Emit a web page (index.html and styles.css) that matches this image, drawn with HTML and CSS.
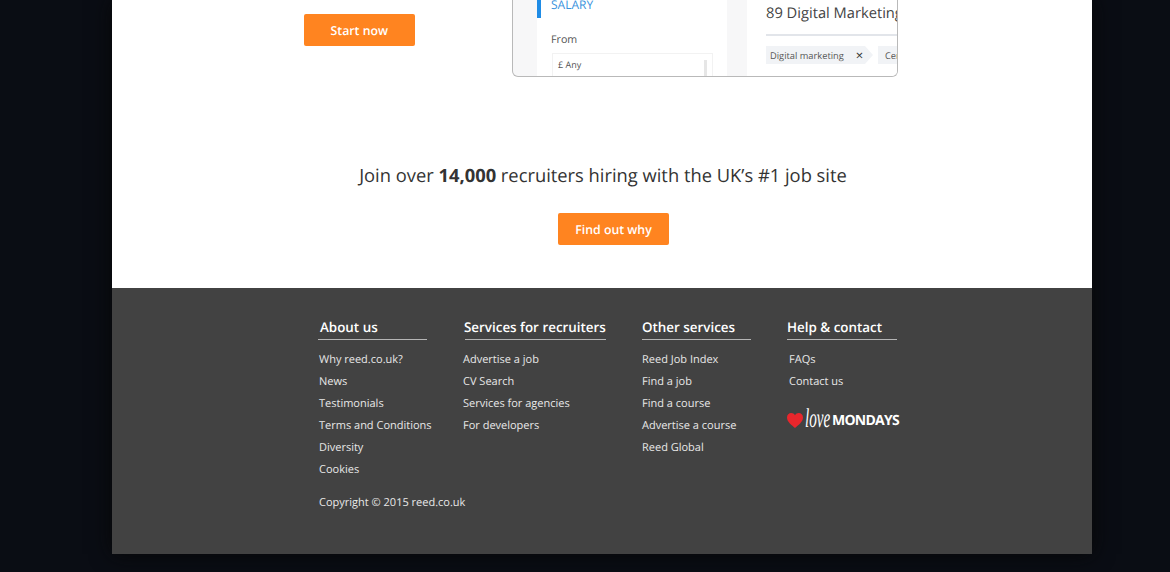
FILE: index.html
```html
<!DOCTYPE html>
<html lang="en">
<head>
<meta charset="utf-8">
<title>Reed</title>
<link rel="stylesheet" href="styles.css">
</head>
<body>
<div class="page">
  <main class="main">
    <section class="hero">
      <div class="hero-cta"><a class="btn" href="#">Start now</a></div>
      <div class="mock">
        <div class="mock-side">
          <div class="mock-title">SALARY</div>
          <div class="mock-label">From</div>
          <div class="mock-select">£ Any<span class="mock-scroll"></span></div>
        </div>
        <div class="mock-results">
          <div class="mock-heading">89 Digital Marketing jobs</div>
          <div class="mock-tags">
            <span class="tag">Digital marketing<span class="tag-x">×</span></span>
            <span class="tag tag-next">Central</span>
          </div>
        </div>
      </div>
    </section>
    <section class="join">
      <h2 class="join-title">Join over <strong>14,000</strong> recruiters hiring with the UK’s #1 job site</h2>
      <a class="btn btn-join" href="#">Find out why</a>
    </section>
  </main>
  <footer class="footer">
    <div class="cols">
      <nav class="col col-about">
        <h3 class="col-title">About us</h3>
        <ul class="links">
          <li>Why reed.co.uk?</li><li>News</li><li>Testimonials</li><li>Terms and Conditions</li><li>Diversity</li><li>Cookies</li>
        </ul>
      </nav>
      <nav class="col col-services">
        <h3 class="col-title">Services for recruiters</h3>
        <ul class="links">
          <li>Advertise a job</li><li>CV Search</li><li>Services for agencies</li><li>For developers</li>
        </ul>
      </nav>
      <nav class="col col-other">
        <h3 class="col-title">Other services</h3>
        <ul class="links">
          <li>Reed Job Index</li><li>Find a job</li><li>Find a course</li><li>Advertise a course</li><li>Reed Global</li>
        </ul>
      </nav>
      <nav class="col col-help">
        <h3 class="col-title">Help &amp; contact</h3>
        <ul class="links">
          <li>FAQs</li><li>Contact us</li>
        </ul>
        <div class="lovemondays">
          <svg class="heart" viewBox="0 0 16 15" width="16" height="15" aria-hidden="true"><path d="M8 15C5 12 0 9 0 4.400 0 1.800 2 0 4.200 0 5.800 0 7.200.8 8 2.200 8.800.8 10.200 0 11.800 0 14 0 16 1.800 16 4.400 16 9 11 12 8 15Z" fill="#e8262c"/></svg>
          <span class="love">love</span><span class="mondays">MONDAYS</span>
        </div>
      </nav>
    </div>
    <p class="copyright">Copyright © 2015 reed.co.uk</p>
  </footer>
</div>
</body>
</html>
```
FILE: styles.css
```css
* { box-sizing: border-box; }
html, body { margin: 0; padding: 0; }
body {
  background: #0a0d14;
  font-family: "Open Sans", "Liberation Sans", sans-serif;
  text-rendering: geometricPrecision;
  height: 572px;
  overflow: hidden;
}
.page {
  width: 980px;
  margin-left: 112px;
  box-shadow: 0 0 20px #070707;
}
.main { background: #fff; height: 288px; }
.hero {
  display: flex;
  height: 77px;
  padding-left: 192px;
}
.hero-cta { width: 208px; padding-top: 14px; }
.btn {
  display: inline-block;
  width: 110.500px;
  height: 32px;
  line-height: 33px;
  background: #ff8420;
  border-radius: 2px;
  color: #fff;
  font-size: 12.300px;
  font-weight: 600;
  text-align: center;
  text-decoration: none;
}
.btn-join { margin-left: 23px; }
.mock {
  width: 386px;
  height: 77px;
  display: flex;
  background: #f7f7f8;
  border: 1px solid #b9b9b9;
  border-top: 0;
  border-radius: 0 0 6px 6px;
  overflow: hidden;
  color: #555;
}
.mock-side {
  width: 190px;
  margin-left: 24px;
  background: #fff;
  height: 76px;
}
.mock-title {
  height: 18px;
  border-left: 4px solid #1f8ce6;
  padding-left: 10px;
  color: #3a93dd;
  font-size: 12px;
  line-height: 10px;
}
.mock-label { font-size: 10.700px; line-height: 15px; margin: 15px 0 0 14px; }
.mock-select {
  position: relative;
  width: 161px;
  height: 30px;
  margin: 5px 0 0 15px;
  border: 1px solid #f2f2f2;
  padding-left: 5px;
  font-size: 9px;
  line-height: 21px;
}
.mock-scroll {
  position: absolute;
  top: 6px;
  right: 5px;
  width: 3px;
  height: 24px;
  background: #e6e6e6;
}
.mock-results {
  width: 150px;
  margin-left: 20px;
  background: #fff;
  padding-left: 19px;
  height: 76px;
  overflow: hidden;
  white-space: nowrap;
}
.mock-heading {
  font-size: 14.700px;
  line-height: 22px;
  padding-top: 2px;
  height: 36px;
  width: 131px;
  border-bottom: 2px solid #e2e5ea;
  color: #444;
}
.mock-tags { display: flex; gap: 5px; margin-top: 10px; }
.tag {
  display: flex;
  align-items: center;
  flex: none;
  height: 18px;
  padding: 0 12px 0 7px;
  background: #f1f3f6;
  font-size: 9.300px;
  color: #555;
}
.tag:first-child {
  width: 107px;
  padding-left: 4px;
  clip-path: polygon(0 0, calc(100% - 8px) 0, 100% 50%, calc(100% - 8px) 100%, 0 100%);
}
.tag-x { margin-left: 12px; font-size: 13px; line-height: 18px; color: #333; }
.join { text-align: center; padding-top: 85px; }
.join-title {
  margin: 0 0 23px;
  padding-left: 2px;
  font-size: 18.330px;
  line-height: 28px;
  font-weight: 400;
  color: #333;
}
.join-title strong { font-weight: 700; }
.footer {
  background: #424242;
  height: 266px;
  padding: 29px 0 0 206px;
  color: #eee;
}
.cols { display: flex; }
.col-about { width: 145px; }
.col-services { width: 179px; }
.col-other { width: 145px; }
.col-help { width: 110px; }
.col-title {
  margin: 0 0 9px;
  height: 23px;
  font-size: 13.400px;
  line-height: 20px;
  font-weight: 600;
  color: #fff;
  border-bottom: 1px solid #b5b5b5;
  padding-left: 0;
  white-space: nowrap;
}
.col-about .col-title { width: 109px; padding-left: 2px; }
.col-services .col-title { width: 141px; margin-left: 2px; text-indent: -1px; }
.col-other .col-title { width: 109px; }
.links { list-style: none; margin: 0; padding: 0; }
.links li { font-size: 11px; line-height: 22px; color: #e8e8e8; }
.col-about .links li { margin-left: 1px; }
.col-help .links li { margin-left: 2px; }
.lovemondays {
  display: flex;
  align-items: center;
  margin-top: 12px;
  height: 26px;
  white-space: nowrap;
}
.heart { flex: none; margin-top: 5px; }
.love {
  display: inline-block;
  flex: none;
  width: 27px;
  margin-left: 2px;
  font-family: "Liberation Serif", serif;
  font-style: italic;
  font-size: 27px;
  line-height: 26px;
  color: #fff;
  transform: scaleX(.56);
  transform-origin: left center;
}
.mondays {
  flex: none;
  font-size: 14px;
  font-weight: 700;
  color: #fff;
  letter-spacing: -.75px;
  margin-top: 5px;
}
.copyright {
  margin: 11px 0 0 1px;
  font-size: 11px;
  line-height: 22px;
  color: #e8e8e8;
}
```
